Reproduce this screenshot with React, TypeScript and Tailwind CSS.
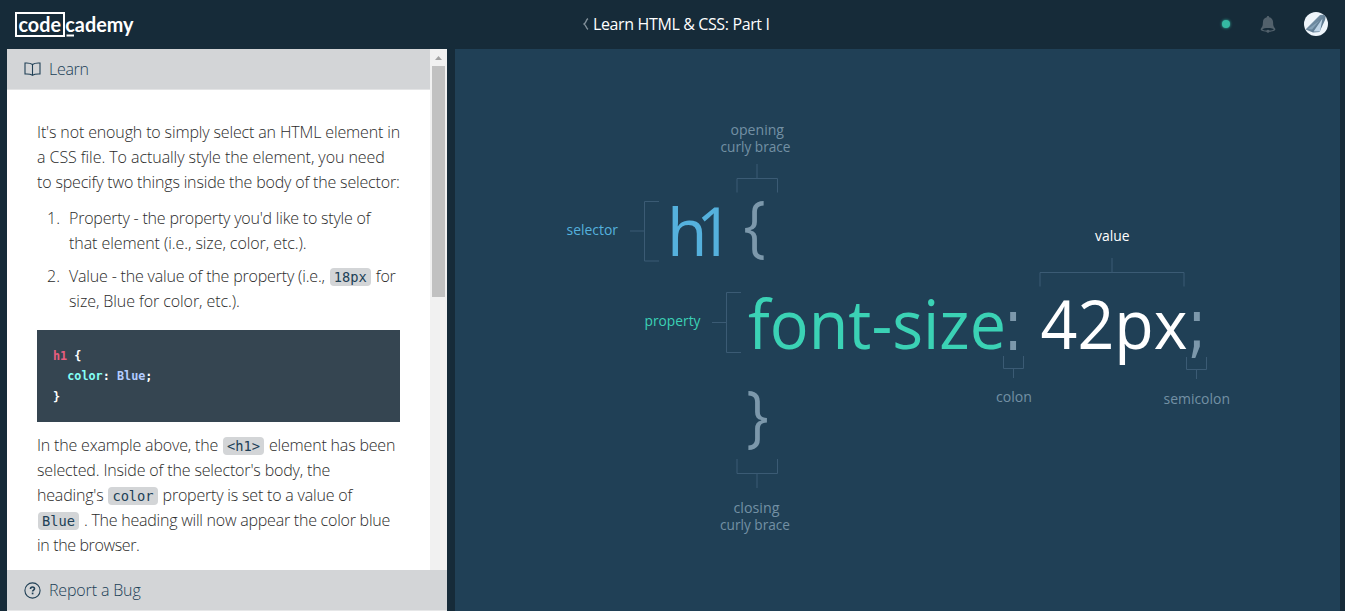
import type { ReactNode } from 'react';

function Logo() {
  return (
    <svg width="126" height="28" viewBox="14 11 126 28" className="shrink-0" fill="#fff" fontFamily="Lato, sans-serif" fontWeight="700" fontSize="21">
      <rect x="16" y="13" width="48" height="23" fill="none" stroke="#fff" strokeWidth="2" />
      <text x="18.500" y="32" textLength="42.500" lengthAdjust="spacingAndGlyphs">code</text>
      <text x="65.300" y="32" textLength="68.200" lengthAdjust="spacingAndGlyphs">cademy</text>
      <rect x="66.500" y="34.5" width="7.500" height="2" />
    </svg>
  );
}

function Avatar() {
  return (
    <svg className="mb-0.5" width="24" height="24" viewBox="0 0 24 24">
      <defs>
        <clipPath id="avatar"><circle cx="12" cy="12" r="12" /></clipPath>
        <linearGradient id="wing" x1="0" y1="0" x2="1" y2="1">
          <stop offset="0" stopColor="#8ba6bb" />
          <stop offset="1" stopColor="#48657d" />
        </linearGradient>
      </defs>
      <g clipPath="url(#avatar)">
        <rect width="24" height="24" fill="#eef5fb" />
        <path d="M1.500 17.500 L16 3 L22 2.500 L21 8 L15.500 20 L9 20.500 Z" fill="url(#wing)" />
        <path d="M9.500 19.500 L18.500 6.500 L16 19.500 Z" fill="#bdd3e6" />
        <path d="M4 17 L15.500 8.500 L8 17.500 Z" fill="#86a2b8" />
      </g>
    </svg>
  );
}

function TopBar() {
  return (
    <header className="grid h-[49px] shrink-0 grid-cols-[1fr_auto_1fr] items-center pl-3.5 pr-[17px]">
      <Logo />
      <div className="mb-0.5 flex items-center gap-1 pl-3 text-white">
        <svg width="6" height="12" viewBox="0 0 6 12" fill="none" stroke="#82909a" strokeWidth="1.4"><path d="M5 .7C2.8 2 3.4 4.6 1 6c2.4 1.4 1.8 4 4 5.300" /></svg>
        <span className="w-[178px] whitespace-nowrap text-base leading-6 tracking-[-0.37px]">Learn HTML &amp; CSS: Part I</span>
      </div>
      <div className="flex items-center justify-end">
        <span className="mr-[30px] mb-px size-2 rounded-full bg-[#35b9a2] shadow-[0_0_3px_#35b9a2]" />
        <svg className="mr-7" width="16" height="17" viewBox="0 0 16 17" fill="#52616c">
          <path fillRule="evenodd" d="M8 0c.8 0 1.100.5 1.200 1.200 2.500.5 3.900 2.500 3.900 5.300 0 3.400.7 4.700 1.800 5.700.7.700.6 1.800-.3 2.400-1.200.8-3.400 1.100-5 1.200-.3.700-.8 1-1.600 1s-1.300-.3-1.600-1c-1.600-.1-3.800-.4-5-1.200-.9-.6-1-1.700-.3-2.400 1.100-1 1.800-2.300 1.800-5.700 0-2.800 1.400-4.800 3.900-5.300C6.900.5 7.200 0 8 0ZM2.200 13.400c1.300 1 3.400 1 4.300 1.100.3-.5.8-.7 1.500-.7s1.200.2 1.500.7c.9-.1 3-.1 4.300-1.100-1.200-1.100-3.300-1.400-5.800-1.400s-4.600.3-5.800 1.400Z" />
        </svg>
        <Avatar />
      </div>
    </header>
  );
}

function Code({ children }: { children: ReactNode }) {
  return (
    <code className="mx-px rounded-sm bg-[#d3d5d7] px-1 py-px font-['DejaVu_Sans_Mono',monospace] text-[13.7px] leading-4 tracking-normal font-normal text-[#204056]">{children}</code>
  );
}

function Line({ className, children }: { className: string; children: ReactNode }) {
  return <span className={`block h-[25px] whitespace-nowrap ${className}`}>{children}</span>;
}

function Lesson() {
  return (
    <div className="h-[480px] overflow-hidden bg-white pl-[30px] pr-[30px] pt-[30px] text-base leading-[25px] font-light text-[#2b2b2b]">
      <p>
        <Line className="tracking-[-0.14px]">It's not enough to simply select an HTML element in</Line>
        <Line className="tracking-[-0.06px]">a CSS file. To actually style the element, you need</Line>
        <Line className="tracking-[-0.17px]">to specify two things inside the body of the selector:</Line>
      </p>
      <ol className="mt-[11px] flex flex-col gap-2">
        <li className="flex">
          <span className="w-8 pl-2.5">1.</span>
          <div>
            <Line className="tracking-[-0.2px]">Property - the property you'd like to style of</Line>
            <Line className="tracking-[-0.07px]">that element (i.e., size, color, etc.).</Line>
          </div>
        </li>
        <li className="flex">
          <span className="w-8 pl-2.5">2.</span>
          <div>
            <Line className="tracking-[-0.18px]">Value - the value of the property (i.e., <Code>18px</Code> for</Line>
            <Line className="tracking-[-0.08px]">size, Blue for color, etc.).</Line>
          </div>
        </li>
      </ol>
      <div className="mt-4 h-[92px] w-[363px] whitespace-pre bg-[#354551] px-4 pt-4 font-['DejaVu_Sans_Mono',monospace] text-[11.8px] leading-[20.3px] font-bold text-white">
        <div className="flex"><span className="text-[#e85d7f]">h1</span><span>{' {'}</span></div>
        <div className="flex"><span className="text-[#83fff5]">{'  color'}</span><span>{': '}</span><span className="text-[#b3ccff]">Blue</span><span>;</span></div>
        <div>{'}'}</div>
      </div>
      <p className="mt-[11px]">
        <Line className="tracking-[-0.18px]">In the example above, the <Code>&lt;h1&gt;</Code> element has been</Line>
        <Line className="tracking-[-0.15px]">selected. Inside of the selector's body, the</Line>
        <Line className="tracking-[-0.19px]">heading's <Code>color</Code> property is set to a value of</Line>
        <Line className="tracking-[-0.23px]"><Code>Blue</Code> . The heading will now appear the color blue</Line>
        <Line className="tracking-[-0.36px]">in the browser.</Line>
      </p>
    </div>
  );
}

function Scrollbar() {
  return (
    <div className="flex w-[17px] flex-col items-center bg-[#f1f1f1]">
      <div className="flex h-[17px] items-center">
        <svg width="7" height="4" viewBox="0 0 7 4" fill="#a3a3a3"><path d="M0 4 3.500 0 7 4Z" /></svg>
      </div>
      <div className="h-[231px] w-[13px] bg-[#c1c1c1]" />
    </div>
  );
}

function LearnPanel() {
  return (
    <section className="flex w-[440px] flex-col bg-[#e6e7e8]">
      <div className="flex h-[521px]">
        <div className="w-[423px]">
          <div className="flex h-[41px] items-center gap-2 border-b border-[#e3e4e5] bg-[#d3d5d7] pl-[17px] text-[#204056]">
            <svg width="17" height="14" viewBox="0 0 17 14" fill="none" stroke="#204056" strokeWidth="1.100"><path d="M8.500 2.500C6.500 1 3.500.8 1 1v11c2.500-.2 5.500 0 7.500 1.300 2-1.300 5-1.500 7.500-1.300V1c-2.500-.2-5.500 0-7.500 1.500Zm0 0v10.800" /></svg>
            <span className="text-base font-light tracking-[-0.3px]">Learn</span>
          </div>
          <Lesson />
        </div>
        <Scrollbar />
      </div>
      <div className="flex h-10 items-center gap-2 bg-[#d3d5d7] pl-[17px] text-[#204056]">
        <svg width="17" height="17" viewBox="0 0 17 17" fill="none" stroke="#204056"><circle cx="8.500" cy="8.500" r="7.600" strokeWidth="1.100" /><path d="M6.500 7c0-1.300.8-2 2-2s2 .7 2 1.700c0 1.300-1.900 1.400-1.900 2.800" strokeWidth="1.600" /><path d="M8.600 10.600v1.700" strokeWidth="1.700" /></svg>
        <span className="whitespace-nowrap text-base font-light tracking-[-0.15px]">Report a Bug</span>
      </div>
    </section>
  );
}

type Label = { text: string; x: number; y: number; w: number; size: number; fill: string; weight: number; font?: string };

const labels: Label[] = [
  { text: 'opening', x: 730.5, y: 134.5, w: 53.5, size: 14, fill: '#7390a4', weight: 400 },
  { text: 'curly brace', x: 720.5, y: 151.5, w: 70, size: 14, fill: '#7390a4', weight: 400 },
  { text: 'selector', x: 566.5, y: 235, w: 51.500, size: 14, fill: '#55b1dd', weight: 400 },
  { text: 'property', x: 644.5, y: 326, w: 56, size: 14, fill: '#3bd2b5', weight: 400 },
  { text: 'value', x: 1095, y: 240.5, w: 34.500, size: 14, fill: '#ffffff', weight: 400 },
  { text: 'colon', x: 996, y: 401.5, w: 36, size: 14, fill: '#7390a4', weight: 400 },
  { text: 'semicolon', x: 1163.5, y: 403.5, w: 66.500, size: 14, fill: '#7390a4', weight: 400 },
  { text: 'closing', x: 733.5, y: 513, w: 46, size: 14, fill: '#7390a4', weight: 400 },
  { text: 'curly brace', x: 720, y: 530, w: 70, size: 14, fill: '#7390a4', weight: 400 },
  { text: 'h', x: 667, y: 256, w: 40.500, size: 66, fill: '#55b1dd', weight: 400 },
  { text: '1', x: 696, y: 256, w: 37, size: 68, fill: '#55b1dd', weight: 400 },
  { text: '{', x: 743.500, y: 249, w: 22, size: 67, fill: '#7c98ab', weight: 500 },
  { text: 'font-size', x: 748, y: 349, w: 258, size: 68, fill: '#3bd2b5', weight: 400 },
  { text: ':', x: 1003.6, y: 350, w: 19.200, size: 73, fill: '#7c98ab', weight: 400, font: 'DejaVu Sans' },
  { text: '42px', x: 1040.5, y: 349, w: 147, size: 68, fill: '#ffffff', weight: 400 },
  { text: ';', x: 1187.3, y: 350, w: 19.200, size: 73, fill: '#7c98ab', weight: 400, font: 'DejaVu Sans' },
  { text: '}', x: 746.500, y: 438.500, w: 22, size: 67, fill: '#7c98ab', weight: 500 },
];

const brackets = [
  'M737 192.500V178.500H777.500V192.500M757 178.500V164',
  'M659 201.500H644.500V261H659M644.500 231H630',
  'M741 292.500H726.500V352.500H741M726.500 322.500H712',
  'M1040 286.500V272.500H1184V286.500M1112 272.500V258',
  'M1003.500 356V368.500H1023.500V356M1013.500 368.500V378',
  'M1186.500 357V369.500H1206.500V357M1196.500 369.500V379',
  'M737 459V473.500H777.500V459M757 473.500V488',
];

function Diagram() {
  return (
    <main className="w-[885px] bg-[#204056]">
      <svg width="885" height="562" viewBox="455 49 885 562" fontFamily="'Open Sans', sans-serif">
        {brackets.map((d) => (
          <path key={d} d={d} fill="none" stroke="#3b5b74" />
        ))}
        {labels.map((l) => (
          <text key={`${l.text}-${l.x}-${l.y}`} x={l.x} y={l.y} textLength={l.w} lengthAdjust="spacingAndGlyphs" fontFamily={l.font} fontSize={l.size} fontWeight={l.weight} fill={l.fill}>
            {l.text}
          </text>
        ))}
      </svg>
    </main>
  );
}

export default function App() {
  return (
    <div className="flex h-[611px] w-[1345px] flex-col overflow-hidden bg-[#162b39] font-['Open_Sans',sans-serif]">
      <TopBar />
      <div className="flex flex-1 gap-2 pl-[7px]">
        <LearnPanel />
        <Diagram />
      </div>
    </div>
  );
}
